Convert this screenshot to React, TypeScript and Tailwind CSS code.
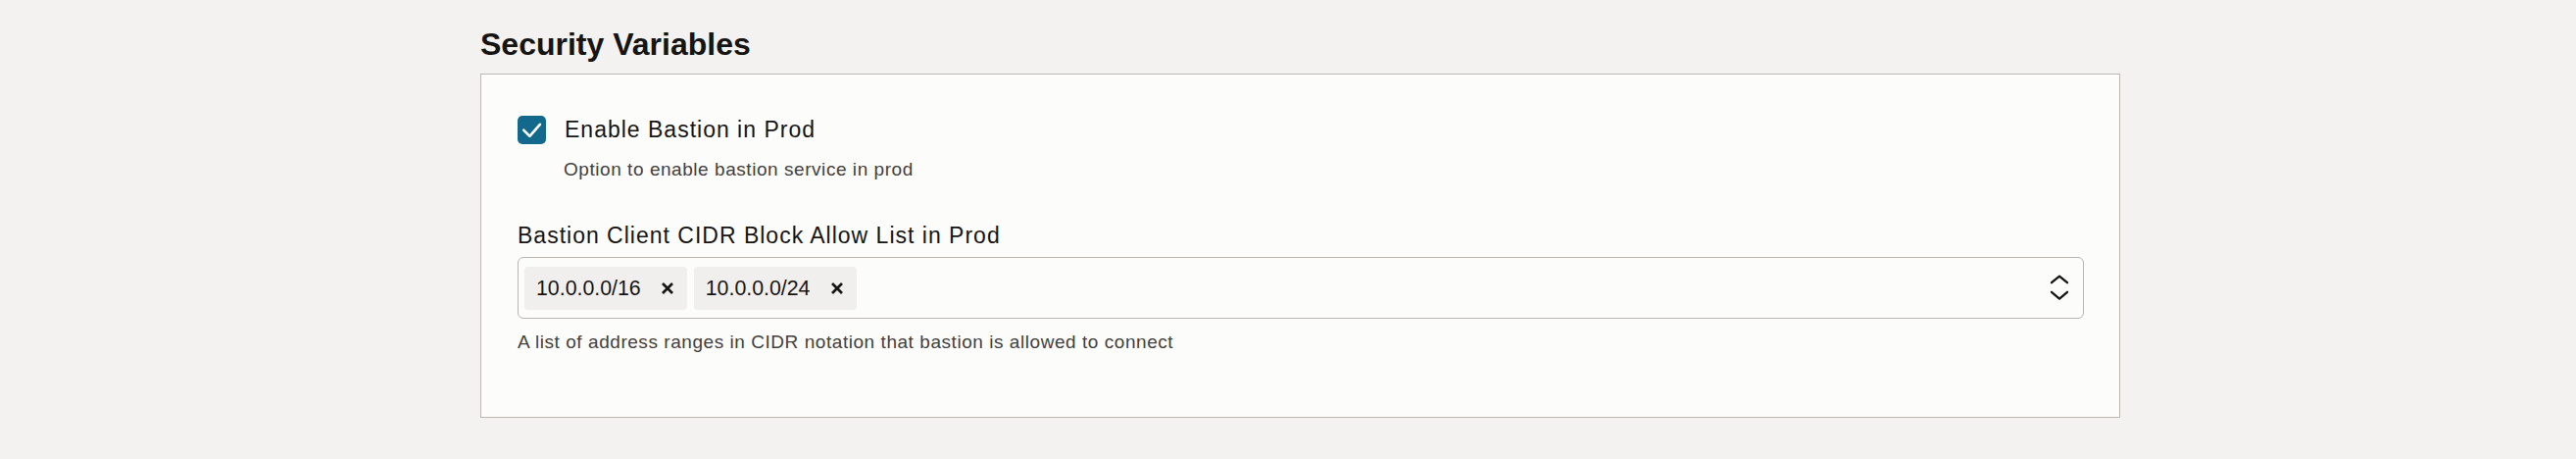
import React from "react";

function CheckIcon() {
  return (
    <svg width="29" height="29" viewBox="0 0 29 29" className="block">
      <path d="M6.2 14.6 L12.4 20.8 L22.9 8.8" fill="none" stroke="#ffffff" strokeWidth="2.6" strokeLinecap="round" strokeLinejoin="round" />
    </svg>
  );
}

function XIcon() {
  return (
    <svg width="14" height="12" viewBox="0 0 14 12" className="block">
      <path d="M2 1 L12 11 M12 1 L2 11" fill="none" stroke="#161513" strokeWidth="2.7" strokeLinecap="butt" />
    </svg>
  );
}

function Chevrons() {
  return (
    <svg width="20" height="27" viewBox="0 0 20 27" className="block">
      <path d="M2 8.2 L10 1.6 L18 8.2" fill="none" stroke="#161513" strokeWidth="2.3" strokeLinecap="round" strokeLinejoin="round" />
      <path d="M2 17.8 L10 24.6 L18 17.8" fill="none" stroke="#161513" strokeWidth="2.3" strokeLinecap="round" strokeLinejoin="round" />
    </svg>
  );
}

function Chip({ label }: { label: string }) {
  return (
    <div className="flex h-[44px] items-center rounded-[4px] bg-[#f1efed] pl-[12px] pr-[13px]">
      <span className="text-[21.33px] leading-[28px] text-[#161513]">{label}</span>
      <span className="ml-[20px]">
        <XIcon />
      </span>
    </div>
  );
}

export default function App() {
  return (
    <div
      className="min-h-[468px] w-[2628px] bg-[#f3f2f1] pt-[25px]"
      style={{ fontFamily: '"Liberation Sans", Arial, Helvetica, sans-serif' }}
    >
      <div className="ml-[490px] w-[1673px]">
        <h1 className="text-[32px] font-bold leading-[40px] text-[#161513]">Security Variables</h1>
        <div className="mt-[10px] border border-[#bdb8b2] bg-[#fcfcfb] pl-[37px] pr-[36px] pt-[42px] pb-[64px]">
          <div className="flex items-center">
            <div className="h-[29px] w-[29px] rounded-[5px] bg-[#13698b]">
              <CheckIcon />
            </div>
            <span className="ml-[19px] text-[23px] leading-[29px] tracking-[1px] text-[#161513]">
              Enable Bastion in Prod
            </span>
          </div>
          <div className="ml-[47px] mt-[14px] text-[19px] leading-[24px] tracking-[0.55px] text-[#43403d]">
            Option to enable bastion service in prod
          </div>
          <div className="mt-[41px] text-[23px] leading-[29px] tracking-[1px] text-[#161513]">
            Bastion Client CIDR Block Allow List in Prod
          </div>
          <div className="mt-[7px] flex h-[63px] items-center rounded-[6px] border border-[#bab5af] bg-[#fcfcfb] pl-[6px] pr-[14px]">
            <div className="flex flex-1 items-center gap-[7px]">
              <Chip label="10.0.0.0/16" />
              <Chip label="10.0.0.0/24" />
            </div>
            <Chevrons />
          </div>
          <div className="mt-[12px] text-[19px] leading-[24px] tracking-[0.55px] text-[#43403d]">
            A list of address ranges in CIDR notation that bastion is allowed to connect
          </div>
        </div>
      </div>
    </div>
  );
}
